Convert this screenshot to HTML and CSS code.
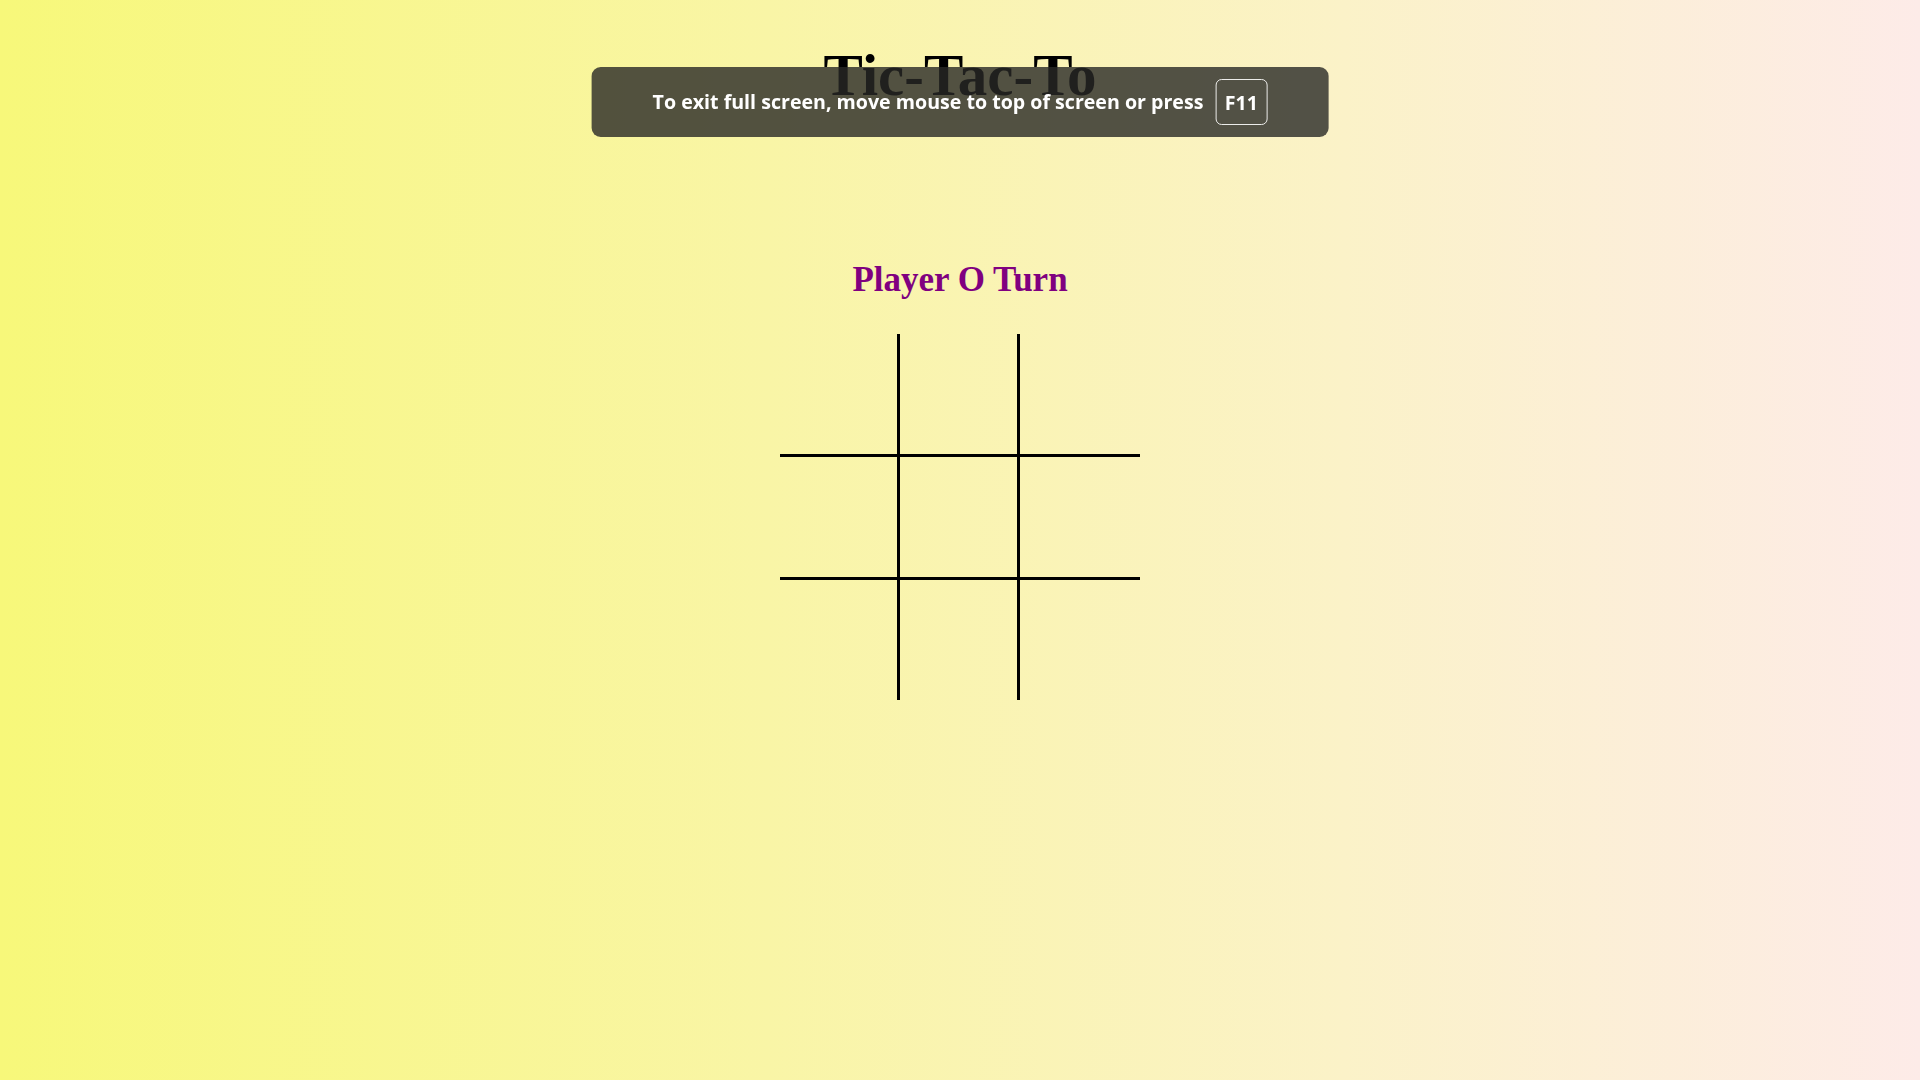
FILE: index.html
```html
<!DOCTYPE html>
<html lang="en">
<head>
<meta charset="utf-8">
<title>Tic-Tac-To</title>
<link rel="stylesheet" href="styles.css">
</head>
<body>
<main class="game">
  <h1 class="title">Tic-Tac-To</h1>
  <h2 class="status">Player O Turn</h2>
  <div class="board">
    <div class="cell br bb"></div>
    <div class="cell br bb"></div>
    <div class="cell bb"></div>
    <div class="cell br bb"></div>
    <div class="cell br bb"></div>
    <div class="cell bb"></div>
    <div class="cell br"></div>
    <div class="cell br"></div>
    <div class="cell"></div>
  </div>
</main>
<div class="fs-notice">
  <span class="fs-text">To exit full screen, move mouse to top of screen or press</span>
  <span class="fs-key">F11</span>
</div>
</body>
</html>
```

FILE: styles.css
```css
html, body {
  margin: 0;
  padding: 0;
  height: 100%;
}
body {
  background: linear-gradient(to right, #f7f87a 0%, #f9f5a6 40%, #fbf2c8 70%, #fdebe8 100%);
  font-family: "Liberation Serif", "Times New Roman", serif;
}
.game {
  display: flex;
  flex-direction: column;
  align-items: center;
  padding-top: 41px;
}
.title {
  margin: 0;
  font-size: 59px;
  font-weight: bold;
  color: #000;
  line-height: normal;
}
.status {
  margin: 150px 0 0;
  font-size: 35px;
  font-weight: bold;
  color: #800080;
  line-height: normal;
}
.board {
  margin-top: 34px;
  display: grid;
  grid-template-columns: 120px 120px 120px;
  grid-template-rows: 123px 123px 120px;
}
.cell {
  box-sizing: border-box;
}
.br { border-right: 3px solid #000; }
.bb { border-bottom: 3px solid #000; }

.fs-notice {
  position: fixed;
  top: 67px;
  left: 50%;
  transform: translateX(-50%);
  height: 70px;
  box-sizing: border-box;
  padding: 0 61px;
  display: flex;
  align-items: center;
  gap: 12px;
  background: rgba(40, 40, 38, 0.8);
  border-radius: 9px;
  color: #fff;
  font-family: "Open Sans", "Noto Sans", sans-serif;
  font-weight: 700;
  font-size: 19.6px;
  white-space: nowrap;
}
.fs-text {
  margin-bottom: 2px;
}
.fs-key {
  display: flex;
  align-items: center;
  justify-content: center;
  width: 52px;
  height: 46px;
  box-sizing: border-box;
  border: 1.5px solid #ececea;
  border-radius: 6px;
}
```
